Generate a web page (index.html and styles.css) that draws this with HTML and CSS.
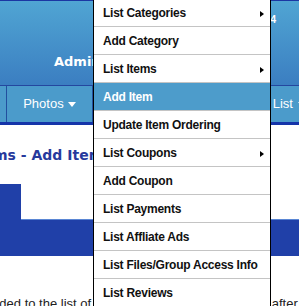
FILE: index.html
```html
<!DOCTYPE html>
<html lang="en">
<head>
  <meta charset="UTF-8">
  <title>Administration Panel - Add Item</title>
  <link rel="stylesheet" href="styles.css">
</head>
<body>
  <div class="page">
    <header class="masthead">
      <div class="masthead-top"><span class="version">Release 1.4</span></div>
      <h1 class="masthead-title">Administration Panel</h1>
    </header>
    <nav class="mainnav">
      <a class="nav-item nav-first">Main</a>
      <a class="nav-item">Photos <span class="caret"></span></a>
      <a class="nav-item">Listings &amp; Payments <span class="caret"></span></a>
      <a class="nav-item">List <span class="caret"></span></a>
    </nav>

    <main class="content">
      <h2 class="page-title">List Items - Add Item</h2>
      <div class="tabs">
        <span class="tab">Details</span>
      </div>
      <div class="tab-band"></div>
      <p class="intro">Item is added to the list of items in the site directory view after</p>
    </main>

    <!-- open dropdown of the list menu -->
    <ul class="dropdown">
      <li class="dropdown-item has-sub">List Categories <span class="sub-arrow"></span></li>
      <li class="dropdown-item">Add Category</li>
      <li class="dropdown-item has-sub">List Items <span class="sub-arrow"></span></li>
      <li class="dropdown-item active">Add Item</li>
      <li class="dropdown-item">Update Item Ordering</li>
      <li class="dropdown-item has-sub">List Coupons <span class="sub-arrow"></span></li>
      <li class="dropdown-item">Add Coupon</li>
      <li class="dropdown-item">List Payments</li>
      <li class="dropdown-item">List Affliate Ads</li>
      <li class="dropdown-item">List Files/Group Access Info</li>
      <li class="dropdown-item">List Reviews</li>
    </ul>
  </div>
</body>
</html>
```

FILE: styles.css
```css
/* Base */
body {
  margin: 0;
  font-family: 'Liberation Sans', Arial, sans-serif;
  background-color: #ffffff;
  overflow: hidden;
}
.page {
  position: relative;
  min-height: 306px;
}

/* Header */
.masthead {
  height: 84px;
  border-top: 1px solid #1b37a3;
  background: linear-gradient(#50a5d3, #3b7ec1);
  color: #ffffff;
}
.masthead-top {
  padding: 13px 23px 0 0;
  text-align: right;
  font-size: 10px;
  font-weight: bold;
  line-height: 12px;
}
.masthead-title {
  margin: 28px 0 0;
  padding-left: 54px;
  font-family: 'DejaVu Sans', Verdana, sans-serif;
  font-size: 13px;
  line-height: 16px;
  white-space: nowrap;
}

/* Main navigation */
.mainnav {
  display: flex;
  height: 36px;
  margin-left: -54px;
  border-top: 1px solid #24479f;
  border-bottom: 3px solid #1534a9;
  background-color: #4b9bcb;
}
.nav-item {
  flex: none;
  padding: 0 16px;
  line-height: 36px;
  font-size: 13px;
  color: #ffffff;
  white-space: nowrap;
  border-right: 1px solid #22509f;
}
.caret {
  display: inline-block;
  width: 0;
  height: 0;
  margin-left: 1px;
  vertical-align: middle;
  border-left: 4px solid transparent;
  border-right: 4px solid transparent;
  border-top: 5px solid #ffffff;
}

/* Content */
.content {
  margin-left: -62px;
  width: 720px;
}
.page-title {
  margin: 22px 0 0;
  font-family: 'DejaVu Sans', Verdana, sans-serif;
  font-size: 14px;
  line-height: 17px;
  color: #27399c;
}
.tabs {
  display: flex;
  margin-top: 20px;
  border-bottom: 1px solid #5a86d4;
}
.tab {
  height: 36px;
  margin-bottom: -1px;
  padding: 0 22px;
  line-height: 36px;
  font-size: 12px;
  font-weight: bold;
  color: #ffffff;
  background-color: #2040a8;
}
.tab-band {
  height: 36px;
  background-color: #2040a8;
}
.intro {
  margin: 40px 0 0 5px;
  font-size: 13px;
  line-height: 16px;
  color: #222222;
  white-space: nowrap;
}

/* Dropdown menu */
.dropdown {
  position: absolute;
  top: -1px;
  left: 93px;
  width: 176px;
  margin: 0;
  padding: 0;
  list-style: none;
  background-color: #ffffff;
  border-left: 1px solid #000000;
  border-right: 1px solid #000000;
}
.dropdown-item {
  display: flex;
  justify-content: space-between;
  align-items: center;
  height: 27px;
  padding: 0 6px 0 9px;
  font-size: 12px;
  font-weight: bold;
  letter-spacing: -0.25px;
  color: #111111;
  border-bottom: 1px solid #c4c4c4;
  white-space: nowrap;
}
.dropdown-item.active {
  background-color: #4d9ccb;
  color: #ffffff;
}
.sub-arrow {
  width: 0;
  height: 0;
  margin-top: 2px;
  border-left: 4px solid #000000;
  border-top: 3px solid transparent;
  border-bottom: 3px solid transparent;
}
```
